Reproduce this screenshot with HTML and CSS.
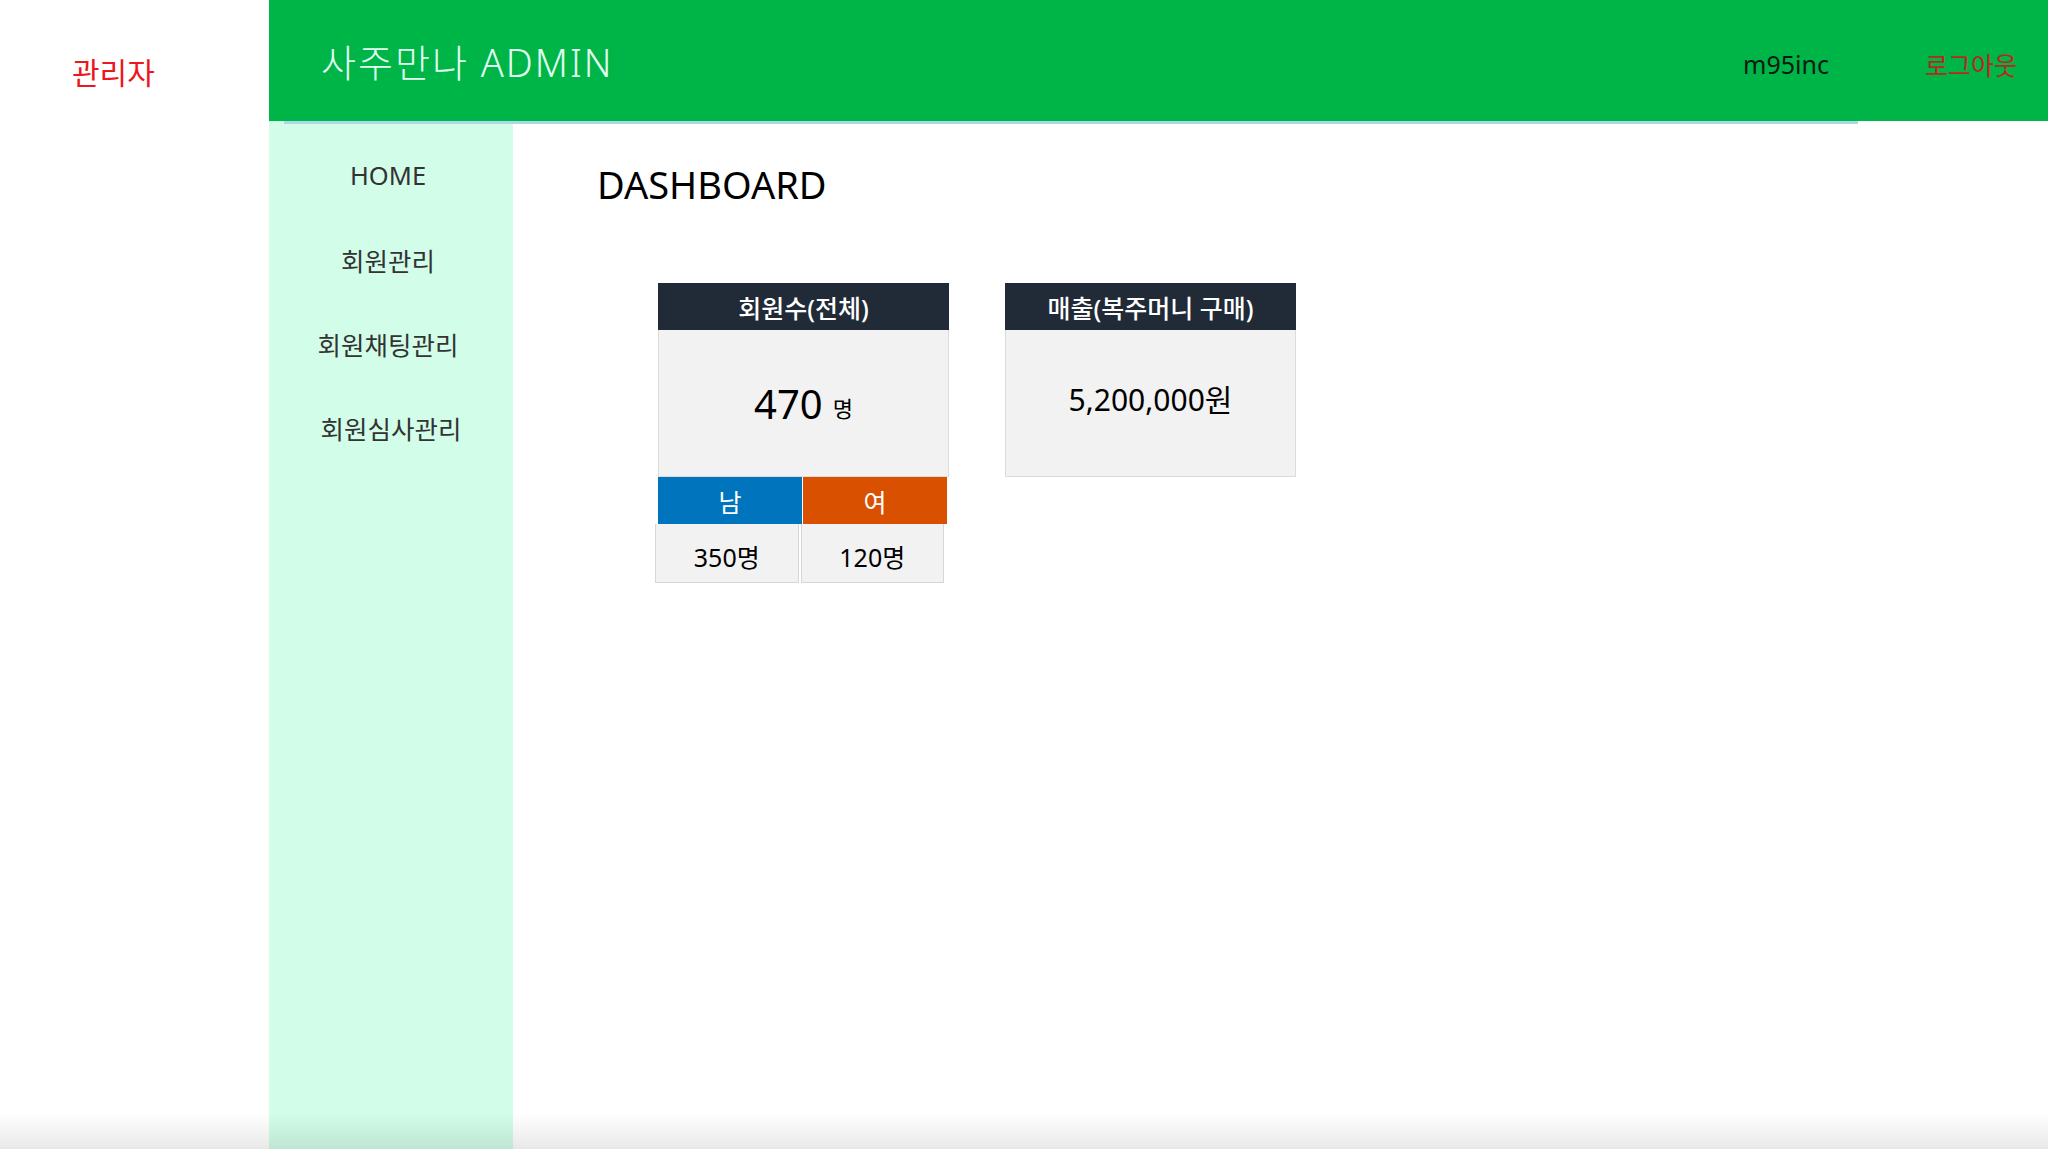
FILE: index.html
```html
<!DOCTYPE html>
<html lang="ko">
<head>
  <meta charset="UTF-8">
  <meta name="viewport" content="width=device-width, initial-scale=1.0">
  <title>사주만나 ADMIN</title>
  <link rel="stylesheet" href="styles.css">
</head>
<body>

<div class="layout">
  <!-- 좌측 상단 -->
  <div class="brand">관리자</div>

  <!-- 상단 바 -->
  <header class="topbar">
    <h1 class="topbar-title">사주만나 ADMIN</h1>
    <div class="topbar-user">
      <span class="user-name">m95inc</span>
      <a class="logout" href="#">로그아웃</a>
    </div>
  </header>

  <div class="rule"><div class="rule-line"></div></div>

  <!-- 메뉴 -->
  <nav class="sidebar">
    <a href="#">HOME</a>
    <a href="#">회원관리</a>
    <a href="#">회원채팅관리</a>
    <a href="#" class="shift">회원심사관리</a>
  </nav>

  <!-- 대시보드 -->
  <main class="main">
    <h2 class="page-title">DASHBOARD</h2>

    <div class="cards">
      <div class="card">
        <div class="card-head">회원수(전체)</div>
        <div class="card-body">
          <span class="big-num">470</span><span class="unit">명</span>
        </div>
        <div class="gender-row">
          <div class="gender male">남</div>
          <div class="gender female">여</div>
        </div>
        <div class="count-row">
          <div class="count">350명</div>
          <div class="count">120명</div>
        </div>
      </div>

      <div class="card">
        <div class="card-head">매출(복주머니 구매)</div>
        <div class="card-body sales">5,200,000원</div>
      </div>
    </div>
  </main>
</div>

<div class="bottom-fade"></div>

</body>
</html>
```

FILE: styles.css
```css
* { box-sizing: border-box; }

body {
  margin: 0;
  font-family: "Noto Sans", "Noto Sans CJK KR", sans-serif;
  color: #111;
  background: #fff;
}

a { text-decoration: none; }

.layout {
  display: grid;
  grid-template-columns: 269px 244px 1fr;
  grid-template-rows: 121px 3px 1fr;
  height: 100vh;
}

/* 좌측 상단 */
.brand {
  grid-column: 1;
  grid-row: 1;
  display: flex;
  align-items: center;
  padding: 20px 0 0 72px;
  font-size: 30px;
  color: #ec1620;
}

/* 상단 바 */
.topbar {
  grid-column: 2 / 4;
  grid-row: 1;
  background: #00b548;
  display: flex;
  align-items: center;
  padding: 0 31px 0 52px;
}

.topbar-title {
  margin: 0;
  font-size: 38px;
  font-weight: 300;
  letter-spacing: 2px;
  color: #e2fff2;
}

.topbar-user {
  margin-left: auto;
  display: flex;
  align-items: center;
  gap: 96px;
  padding-top: 6px;
  font-size: 25px;
}

.user-name { color: #0c1a10; }
.logout { color: #b8281c; }

.rule {
  grid-column: 2 / 4;
  grid-row: 2;
  background: linear-gradient(to right, #d2fde8 15px, #fff 15px);
}

.rule-line {
  margin-left: 15px;
  width: 1574px;
  height: 3px;
  background: #a9d9e6;
}

/* 메뉴 */
.sidebar {
  grid-column: 2;
  grid-row: 3;
  background: #d2fde8;
  display: flex;
  flex-direction: column;
  padding-top: 9px;
}

.sidebar a {
  height: 84px;
  display: flex;
  align-items: center;
  justify-content: center;
  padding-right: 6px;
  font-size: 25.5px;
  color: #333;
}

.sidebar a.shift { padding-right: 0; }

/* 대시보드 */
.main {
  grid-column: 3;
  grid-row: 3;
  padding: 36px 0 0 84px;
}

.page-title {
  margin: 0;
  font-size: 38px;
  line-height: 48px;
  font-weight: 400;
  color: #000;
}

.cards {
  display: flex;
  align-items: flex-start;
  gap: 56px;
  margin: 75px 0 0 61px;
}

.card {
  width: 291px;
}

.card-head {
  height: 47px;
  background: #212a37;
  color: #fff;
  font-size: 25px;
  font-weight: 500;
  display: flex;
  align-items: center;
  justify-content: center;
}

.card-body {
  height: 147px;
  background: #f2f2f2;
  border: 1px solid #dcdcdc;
  border-top: none;
  display: flex;
  align-items: center;
  justify-content: center;
  color: #000;
}

.big-num {
  font-size: 40px;
}

.unit {
  font-size: 22px;
  margin: 8px 0 0 10px;
}

.card-body.sales {
  font-size: 30px;
  padding-bottom: 10px;
}

.gender-row {
  display: flex;
  gap: 1px;
  width: 289px;
}

.gender {
  flex: 1;
  height: 47px;
  display: flex;
  align-items: center;
  justify-content: center;
  color: #fff;
  font-size: 25px;
}

.male { background: #0075bd; }
.female { background: #d95100; }

.count-row {
  display: flex;
  gap: 2px;
  width: 289px;
  margin-left: -3px;
}

.count {
  flex: 1;
  height: 59px;
  background: #f2f2f2;
  border: 1px solid #d6d6d6;
  border-top: none;
  display: flex;
  align-items: center;
  justify-content: center;
  padding-top: 6px;
  font-size: 25px;
  color: #000;
}

/* 화면 하단 그림자 */
.bottom-fade {
  position: fixed;
  left: 0;
  right: 0;
  bottom: 0;
  height: 36px;
  background: linear-gradient(to bottom, rgba(0,0,0,0), rgba(0,0,0,0.09));
  pointer-events: none;
}
```
